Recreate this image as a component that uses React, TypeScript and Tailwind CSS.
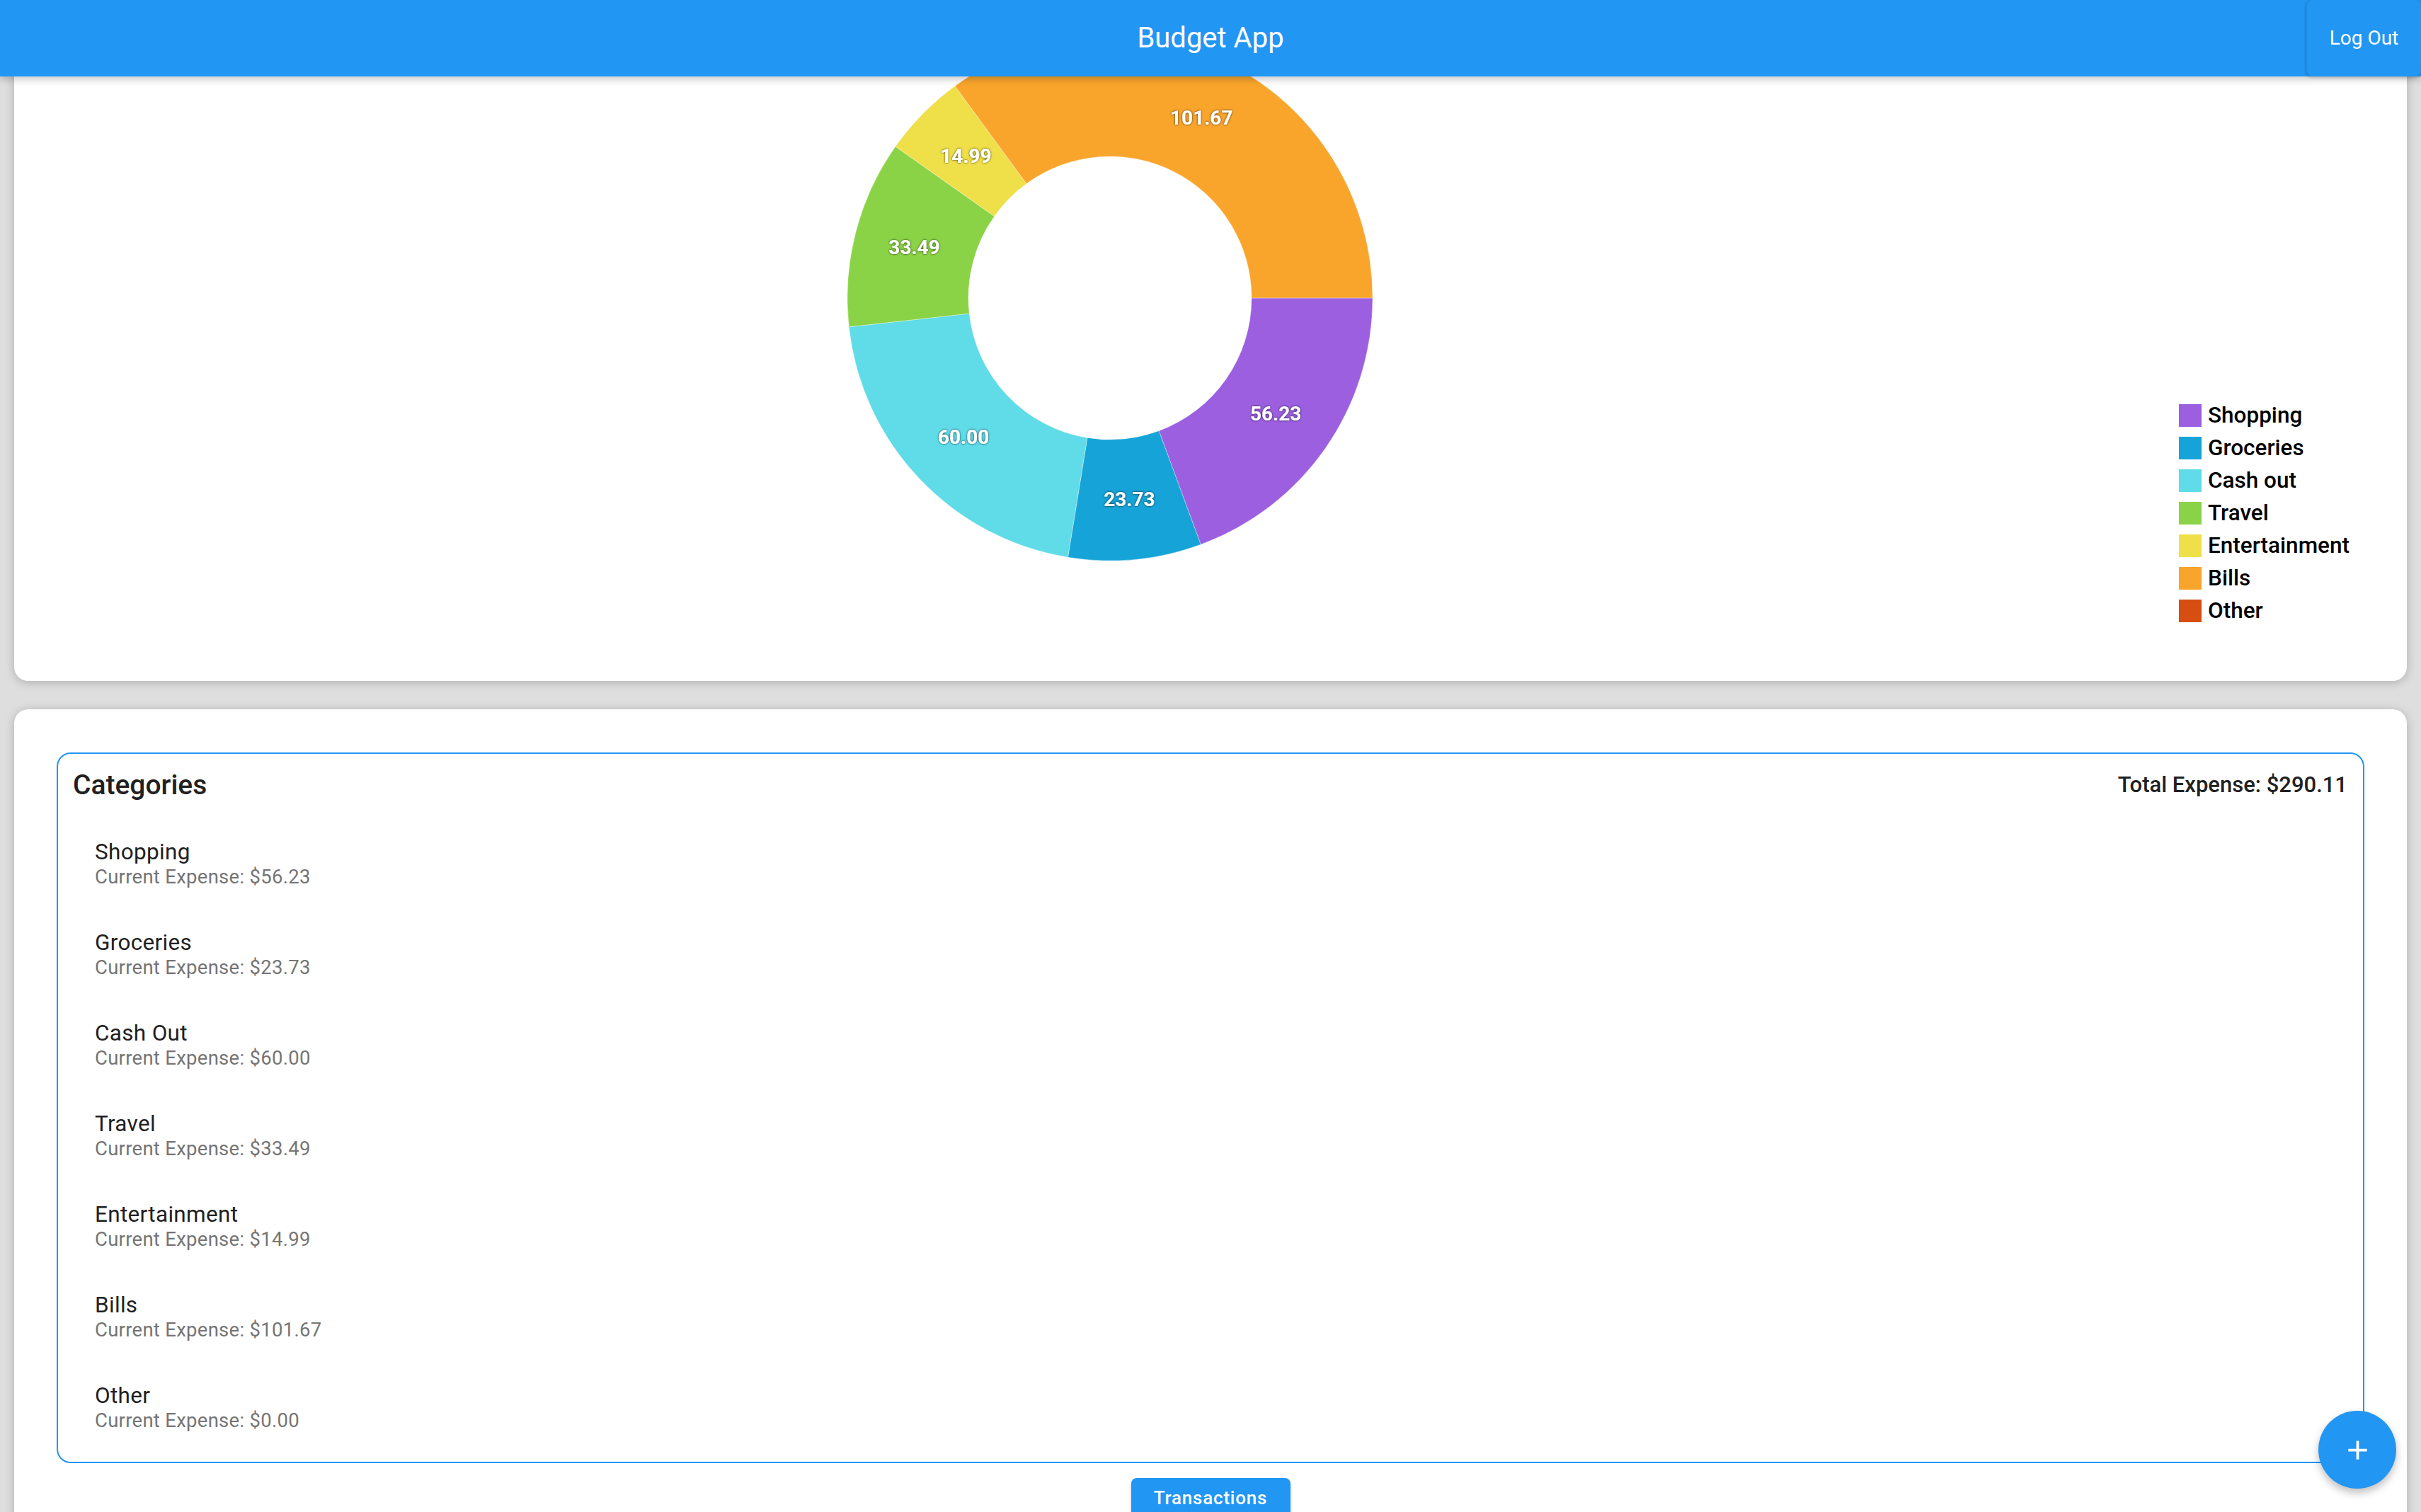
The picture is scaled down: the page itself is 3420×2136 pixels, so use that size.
import React from 'react';

interface Category {
  name: string;
  legend: string;
  value: number;
  color: string;
}

const CATEGORIES: Category[] = [
  { name: 'Shopping', legend: 'Shopping', value: 56.23, color: '#9b5fe0' },
  { name: 'Groceries', legend: 'Groceries', value: 23.73, color: '#16a4d8' },
  { name: 'Cash Out', legend: 'Cash out', value: 60.0, color: '#60dbe8' },
  { name: 'Travel', legend: 'Travel', value: 33.49, color: '#8bd346' },
  { name: 'Entertainment', legend: 'Entertainment', value: 14.99, color: '#efdf48' },
  { name: 'Bills', legend: 'Bills', value: 101.67, color: '#f9a52c' },
  { name: 'Other', legend: 'Other', value: 0, color: '#d64e12' },
];

const total = CATEGORIES.reduce((sum, c) => sum + c.value, 0);

function Donut() {
  const size = 742;
  const c = size / 2;
  const outer = 371;
  const inner = 200;
  const mid = (outer + inner) / 2;

  let start = 0;
  const slices = CATEGORIES.filter((cat) => cat.value > 0).map((cat) => {
    const sweep = (cat.value / total) * Math.PI * 2;
    const a0 = start;
    const a1 = start + sweep;
    start = a1;
    const large = sweep > Math.PI ? 1 : 0;
    const p = (r: number, a: number) => `${c + r * Math.cos(a)} ${c + r * Math.sin(a)}`;
    const d = `M ${p(outer, a0)} A ${outer} ${outer} 0 ${large} 1 ${p(outer, a1)} L ${p(inner, a1)} A ${inner} ${inner} 0 ${large} 0 ${p(inner, a0)} Z`;
    const am = (a0 + a1) / 2;
    return { cat, d, lx: c + mid * Math.cos(am), ly: c + mid * Math.sin(am) };
  });

  return (
    <svg width={size} height={size} viewBox={`0 0 ${size} ${size}`} className="block shrink-0">
      <defs>
        <filter id="lbl" x="-30%" y="-30%" width="160%" height="160%">
          <feDropShadow dx="0" dy="0" stdDeviation="1.6" floodColor="#000" floodOpacity="0.8" />
        </filter>
      </defs>
      {slices.map((s) => (
        <path key={s.cat.name} d={s.d} fill={s.cat.color} stroke="#ffffff" strokeOpacity="0.35" strokeWidth="1" />
      ))}
      {slices.map((s) => (
        <text
          key={`${s.cat.name}-label`}
          x={s.lx}
          y={s.ly}
          textAnchor="middle"
          dominantBaseline="central"
          fill="#ffffff"
          filter="url(#lbl)"
          className="text-[28px] font-bold"
        >
          {s.cat.value.toFixed(2)}
        </text>
      ))}
    </svg>
  );
}

export default function App() {
  return (
    <div className="relative h-screen overflow-hidden bg-[#dedede] font-['Roboto',sans-serif]">
      {/* App bar */}
      <header className="absolute inset-x-0 top-0 z-20 grid h-[108px] grid-cols-[1fr_auto_1fr] items-center bg-[#2196f3] shadow-[0_4px_10px_rgba(0,0,0,0.22)]">
        <span />
        <h1 className="text-[40px] font-normal text-white">Budget App</h1>
        <div className="flex h-full justify-end">
          <button className="h-full w-[162px] rounded-[8px] border-l border-[#1e88e5] bg-[#2196f3] text-[28px] text-white shadow-[0_1px_4px_rgba(0,0,0,0.25)]">
            Log Out
          </button>
        </div>
      </header>

      <main className="flex flex-col gap-[40px] px-[20px]">
        {/* Chart card */}
        <section className="-mt-[10px] flex rounded-[20px] bg-white p-[60px] shadow-[0_2px_14px_rgba(0,0,0,0.22)]">
          <div className="flex flex-1 justify-center pb-[110px]">
            <Donut />
          </div>
          <ul className="flex w-[284px] flex-col justify-end gap-[14px] pb-[23px] pl-[22px]">
            {CATEGORIES.map((cat) => (
              <li key={cat.name} className="flex items-center gap-[9px]">
                <span className="h-[32px] w-[32px] shrink-0" style={{ backgroundColor: cat.color }} />
                <span className="text-[31.5px] font-medium leading-[32px] text-black">{cat.legend}</span>
              </li>
            ))}
          </ul>
        </section>

        {/* Categories card */}
        <section className="rounded-[20px] bg-white px-[60px] pb-[60px] pt-[61px] shadow-[0_2px_14px_rgba(0,0,0,0.22)]">
          <div className="rounded-[20px] border-2 border-[#2196f3] px-[22px] pb-[10px] pt-[22px]">
            <div className="flex items-center justify-between">
              <h2 className="-ml-[1px] text-[39px] font-medium leading-[44px] text-[#212121]">Categories</h2>
              <span className="text-[31px] font-medium leading-[44px] text-[#212121]">
                Total Expense: ${total.toFixed(2)}
              </span>
            </div>
            <ul className="pt-[28px]">
              {CATEGORIES.map((cat) => (
                <li key={cat.name} className="pb-[35px] pl-[30px] pt-[22px]">
                  <p className="text-[31.5px] leading-[45px] tracking-[0.01em] text-[#212121]">{cat.name}</p>
                  <p className="text-[27.5px] leading-[26px] tracking-[0.01em] text-[#757575]">
                    Current Expense: ${cat.value.toFixed(2)}
                  </p>
                </li>
              ))}
            </ul>
          </div>
          <div className="mt-[21px] flex justify-center">
            <button className="w-[225px] rounded-[8px] bg-[#2196f3] py-[8px] text-[26px] font-medium leading-[40px] tracking-[0.03em] text-white shadow-[0_3px_5px_rgba(0,0,0,0.2)]">
              Transactions
            </button>
          </div>
        </section>
      </main>

      {/* Floating add button */}
      <button className="absolute bottom-[33px] right-[35px] z-10 flex h-[110px] w-[110px] items-center justify-center rounded-full bg-[#2196f3] shadow-[0_6px_12px_rgba(0,0,0,0.25)]">
        <svg viewBox="0 0 24 24" className="h-[45px] w-[45px] fill-white">
          <path d="M19 13h-6v6h-2v-6H5v-2h6V5h2v6h6v2z" />
        </svg>
      </button>
    </div>
  );
}
